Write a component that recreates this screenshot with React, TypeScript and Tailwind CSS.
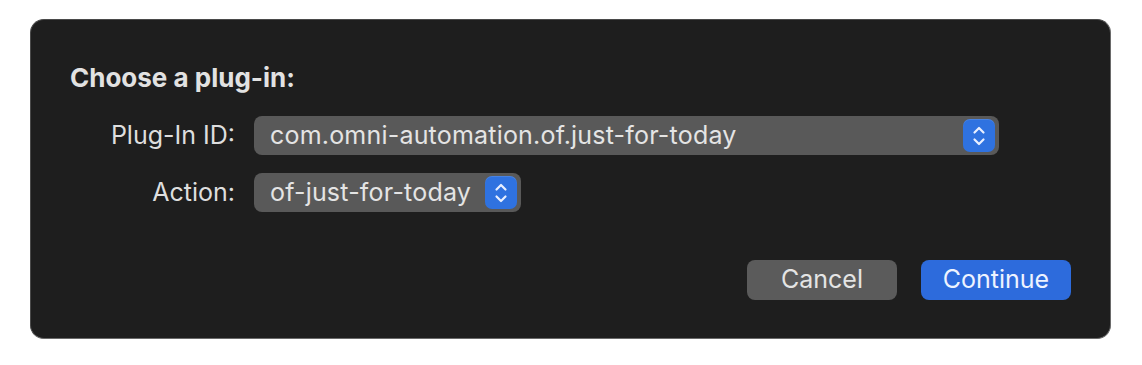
import React from "react"

function Stepper() {
  return (
    <div className="flex h-[33px] w-[32px] items-center justify-center rounded-[7px] bg-[#2f72e0] shadow-[inset_0_1px_0_rgba(255,255,255,0.12)]">
      <svg width="14" height="22" viewBox="0 0 14 22" fill="none">
        <path d="M2.5 7.5 L7 3 L11.5 7.5" stroke="#e8efff" strokeWidth="2.2" strokeLinecap="round" strokeLinejoin="round" />
        <path d="M2.5 14.5 L7 19 L11.5 14.5" stroke="#e8efff" strokeWidth="2.2" strokeLinecap="round" strokeLinejoin="round" />
      </svg>
    </div>
  )
}

function Select({ value, width }: { value: string; width: string }) {
  return (
    <div className={`flex h-[39px] items-center justify-between rounded-[8px] bg-[#595959] pl-[16px] pr-[4px] ${width}`}>
      <span className="text-[25px] leading-none tracking-[0.2px] text-[#e4e4e4]">{value}</span>
      <Stepper />
    </div>
  )
}

export default function App() {
  return (
    <div className="min-h-[365px] w-[1142px] bg-white pl-[30px] pt-[19px]" style={{ fontFamily: "Inter, 'Noto Sans', sans-serif" }}>
      <div className="h-[320px] w-[1081px] rounded-[14px] border border-[#4a4a4a] border-b-[#6a6a6a] border-r-[#6a6a6a] bg-[#1e1e1e] px-[39px] pt-[42px]">
        <h1 className="text-[26px] font-bold leading-[32px] text-[#e2e2e2]">Choose a plug-in:</h1>

        <div className="mt-[22px] flex flex-col gap-[18px]">
          <div className="flex items-center">
            <div className="w-[166px] pr-[1px] text-right text-[25px] text-[#dedede]">Plug-In ID:</div>
            <div className="ml-[18px]">
              <Select value="com.omni-automation.of.just-for-today" width="w-[745px]" />
            </div>
          </div>
          <div className="flex items-center">
            <div className="w-[166px] pr-[1px] text-right text-[25px] text-[#dedede]">Action:</div>
            <div className="ml-[18px]">
              <Select value="of-just-for-today" width="w-[267px]" />
            </div>
          </div>
        </div>

        <div className="mt-[48px] flex justify-end gap-[24px]">
          <button className="h-[40px] w-[150px] rounded-[8px] bg-[#5b5b5b] text-[25px] text-[#e4e4e4]">Cancel</button>
          <button className="h-[40px] w-[150px] rounded-[8px] bg-[#2d6bdc] text-[25px] text-[#eef3ff]">Continue</button>
        </div>
      </div>
    </div>
  )
}
